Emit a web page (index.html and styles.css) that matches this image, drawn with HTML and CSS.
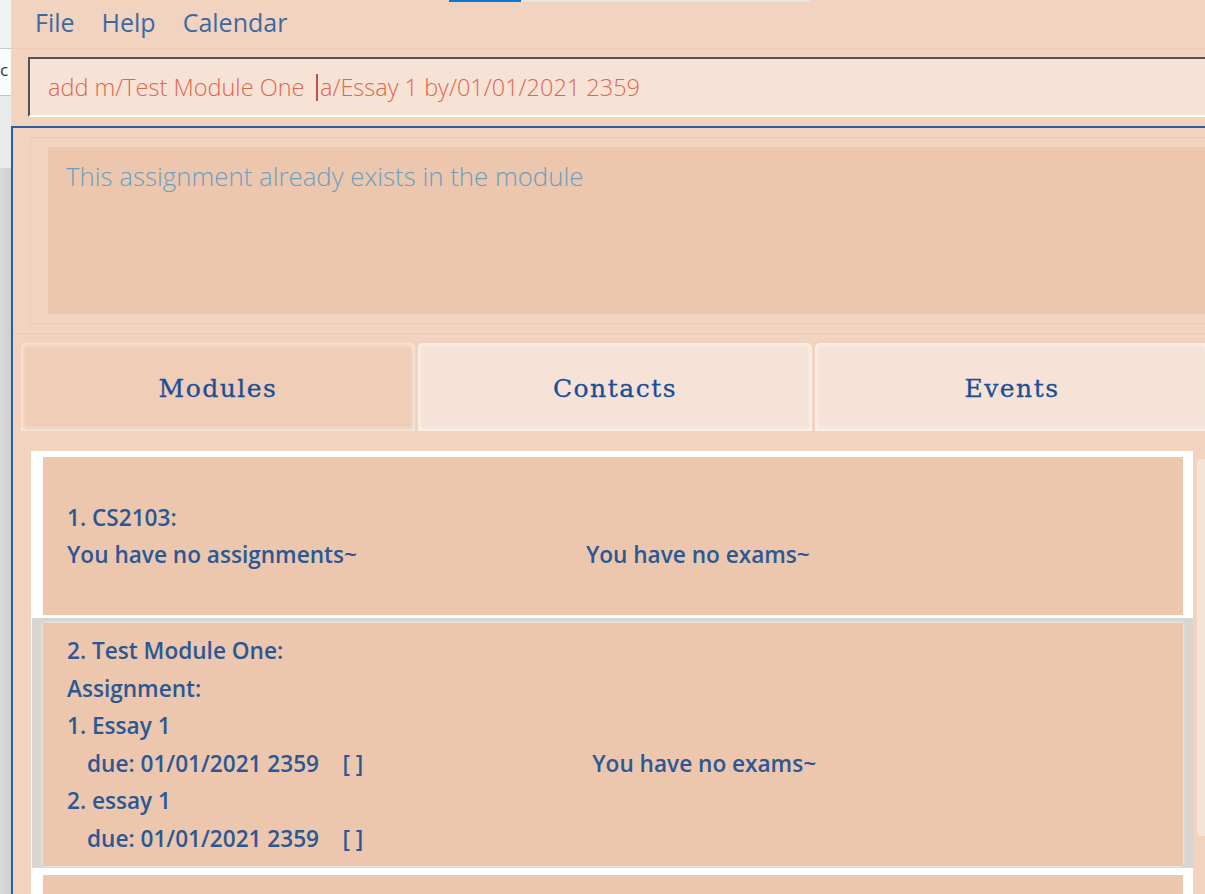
FILE: index.html
```html
<!DOCTYPE html>
<html lang="en">
<head>
<meta charset="utf-8">
<title>Module Tracker</title>
<link rel="stylesheet" href="styles.css">
</head>
<body>
<div class="screen">
  <div class="side">
    <div class="side-top"></div>
    <div class="side-tab"><span class="side-glyph">c</span></div>
    <div class="side-mid"></div>
    <div class="side-bottom"></div>
  </div>
  <div class="app">
    <div class="progress"><span class="progress-fill"></span></div>
    <nav class="menubar">
      <span class="menu-item">File</span>
      <span class="menu-item">Help</span>
      <span class="menu-item">Calendar</span>
    </nav>
    <div class="command-area">
      <div class="command-box"><span>add m/Test Module One</span><span class="caret"></span><span>a/Essay 1 by/01/01/2021 2359</span></div>
    </div>
    <main class="panel">
      <div class="result-wrap">
        <section class="result-outer">
          <div class="result-inner">This assignment already exists in the module</div>
        </section>
      </div>
      <div class="tabs">
        <div class="tab tab-active">Modules</div>
        <div class="tab">Contacts</div>
        <div class="tab">Events</div>
      </div>
      <div class="list-wrap">
        <div class="list">
          <div class="cell">
            <div class="card card-short">
              <div class="line">1. CS2103:</div>
              <div class="row">
                <div class="col-left">
                  <div class="line">You have no assignments~</div>
                </div>
                <div class="col-right">
                  <div class="line">You have no exams~</div>
                </div>
              </div>
            </div>
          </div>
          <div class="cell cell-selected">
            <div class="card">
              <div class="line">2. Test Module One:</div>
              <div class="row">
                <div class="col-left">
                  <div class="line">Assignment:</div>
                  <div class="line">1. Essay 1</div>
                  <div class="line indent">due: 01/01/2021 2359    [ ]</div>
                  <div class="line">2. essay 1</div>
                  <div class="line indent">due: 01/01/2021 2359    [ ]</div>
                </div>
                <div class="col-right">
                  <div class="line">You have no exams~</div>
                </div>
              </div>
            </div>
          </div>
          <div class="cell cell-next">
            <div class="card card-stub"></div>
          </div>
        </div>
        <div class="scrollbar"><div class="thumb"></div></div>
      </div>
    </main>
  </div>
</div>
</body>
</html>
```

FILE: styles.css
```css
* { box-sizing: border-box; }

html, body {
  margin: 0;
  padding: 0;
  width: 1205px;
  height: 894px;
  overflow: hidden;
  background: #d6d6d6;
}

.screen {
  display: flex;
  width: 1205px;
  height: 894px;
  overflow: hidden;
}

/* window behind, on the left */
.side {
  width: 11px;
  flex: none;
  display: flex;
  flex-direction: column;
  background: linear-gradient(to right, #dadada, #cfcfcf);
}
.side-top {
  height: 49px;
  background: #f2f2f2;
  border-bottom: 1px solid #c9c9c9;
}
.side-tab {
  height: 47px;
  background: #fbfbfb;
  border-bottom: 1px solid #c4c4c4;
  display: flex;
  align-items: center;
  padding-bottom: 4px;
}
.side-glyph {
  font-family: "Open Sans", sans-serif;
  font-size: 17px;
  line-height: 20px;
  color: #333;
}
.side-mid {
  height: 72px;
  background: #ebebeb;
}
.side-bottom { flex: 1; }

/* main window */
.app {
  flex: 1;
  position: relative;
  display: flex;
  flex-direction: column;
  background: #f1d3bf;
  font-family: "Open Sans", "Noto Sans", sans-serif;
  min-width: 0;
}

.progress {
  position: absolute;
  left: 438px;
  top: 0;
  width: 361px;
  height: 2px;
  background: #e4e4e4;
}
.progress-fill {
  display: block;
  width: 72px;
  height: 2px;
  background: #0a78d2;
}

.menubar {
  height: 49px;
  flex: none;
  display: flex;
  align-items: center;
  gap: 27px;
  padding-left: 24px;
  padding-bottom: 5px;
  border-bottom: 1px solid #eecbb5;
}
.menu-item {
  font-size: 25px;
  color: #3d69a3;
}

.command-area {
  height: 77px;
  flex: none;
  padding: 8px 0 9px 17px;
}
.command-box {
  height: 60px;
  background: #f7e3d6;
  border-top: 2px solid #525252;
  border-left: 2px solid #525252;
  border-bottom: 2px solid #ffffff;
  display: flex;
  align-items: center;
  padding-left: 18px;
  font-size: 23.5px;
  font-weight: 300;
  color: #e0664d;
  white-space: pre;
}
.caret {
  display: inline-block;
  width: 1.5px;
  height: 27px;
  background: #c4504a;
  margin: 0 2px 0 12px;
}

.panel {
  flex: 1;
  border-top: 2px solid #2b5d9f;
  border-left: 2px solid #2b5d9f;
  display: flex;
  flex-direction: column;
  min-height: 0;
}

.result-wrap {
  padding: 9px 0 9px 17px;
  border-bottom: 1px solid #eecab4;
}
.result-outer {
  height: 187px;
  border: 1px solid #eecab4;
  border-right: none;
  padding: 9px 0 9px 17px;
}
.result-inner {
  height: 167px;
  background: #ecc7ad;
  padding: 11px 18px;
  font-size: 25.8px;
  font-weight: 300;
  line-height: 36px;
  color: #6b9fc1;
}

.tabs {
  display: flex;
  gap: 3px;
  margin: 9px 0 0 8px;
  height: 88px;
  flex: none;
}
.tab {
  width: 394px;
  flex: none;
  border-radius: 5px 5px 0 0;
  background: #f6e2d6;
  box-shadow: inset 0 0 4px 2px rgba(255, 255, 255, 0.55);
  display: flex;
  align-items: center;
  justify-content: center;
  font-family: "DejaVu Serif", serif;
  font-size: 25px;
  letter-spacing: 1.5px;
  color: #1a4f98;
  -webkit-text-stroke: 0.3px #1a4f98;
  padding-top: 3px;
}
.tab-active {
  background: #efcdb7;
}

.list-wrap {
  flex: 1;
  display: flex;
  margin: 20px 0 0 18px;
  min-height: 0;
}
.list {
  flex: 1;
  background: #ffffff;
  display: flex;
  flex-direction: column;
  overflow: hidden;
}
.cell {
  padding: 6px 10px 3px 12px;
  flex: none;
}
.cell-selected {
  background: #d9d4d0;
  padding: 5px 10px 2px 11px;
  margin-left: 1px;
}
.cell-next {
  padding-top: 7px;
}
.card {
  background: #ecc7ad;
  min-height: 158px;
  padding: 9px 24px;
  display: flex;
  flex-direction: column;
  justify-content: center;
  font-size: 22.6px;
  font-weight: 600;
  color: #2b5894;
  box-shadow: 0 0 3px rgba(255, 255, 255, 0.9);
}
.card-stub {
  min-height: 60px;
}
.line {
  line-height: 37.5px;
  white-space: pre;
}
.indent {
  padding-left: 20px;
}
.row {
  display: flex;
  align-items: center;
  gap: 229px;
}
.col-left, .col-right {
  display: flex;
  flex-direction: column;
}

.scrollbar {
  width: 12px;
  flex: none;
  background: #f1d3bf;
  padding: 8px 0 0 4px;
}
.thumb {
  height: 377px;
  background: #f6e3d7;
  border-radius: 4px 0 0 4px;
}
```
